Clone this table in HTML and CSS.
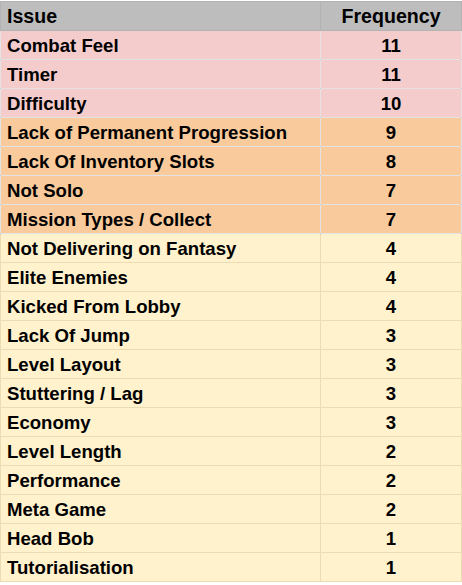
FILE: index.html
```html
<!DOCTYPE html>
<html>
<head>
<meta charset="utf-8">
<link rel="stylesheet" href="styles.css">
</head>
<body>
<table class="sheet">
  <colgroup><col class="c-issue"><col class="c-freq"></colgroup>
  <thead>
    <tr class="head"><th class="issue">Issue</th><th class="freq">Frequency</th></tr>
  </thead>
  <tbody>
    <tr class="red"><td class="issue">Combat Feel</td><td class="freq">11</td></tr>
    <tr class="red"><td class="issue">Timer</td><td class="freq">11</td></tr>
    <tr class="red"><td class="issue">Difficulty</td><td class="freq">10</td></tr>
    <tr class="orange"><td class="issue">Lack of Permanent Progression</td><td class="freq">9</td></tr>
    <tr class="orange"><td class="issue">Lack Of Inventory Slots</td><td class="freq">8</td></tr>
    <tr class="orange"><td class="issue">Not Solo</td><td class="freq">7</td></tr>
    <tr class="orange"><td class="issue">Mission Types / Collect</td><td class="freq">7</td></tr>
    <tr class="yellow"><td class="issue">Not Delivering on Fantasy</td><td class="freq">4</td></tr>
    <tr class="yellow"><td class="issue">Elite Enemies</td><td class="freq">4</td></tr>
    <tr class="yellow"><td class="issue">Kicked From Lobby</td><td class="freq">4</td></tr>
    <tr class="yellow"><td class="issue">Lack Of Jump</td><td class="freq">3</td></tr>
    <tr class="yellow"><td class="issue">Level Layout</td><td class="freq">3</td></tr>
    <tr class="yellow"><td class="issue">Stuttering / Lag</td><td class="freq">3</td></tr>
    <tr class="yellow"><td class="issue">Economy</td><td class="freq">3</td></tr>
    <tr class="yellow"><td class="issue">Level Length</td><td class="freq">2</td></tr>
    <tr class="yellow"><td class="issue">Performance</td><td class="freq">2</td></tr>
    <tr class="yellow"><td class="issue">Meta Game</td><td class="freq">2</td></tr>
    <tr class="yellow"><td class="issue">Head Bob</td><td class="freq">1</td></tr>
    <tr class="yellow"><td class="issue">Tutorialisation</td><td class="freq">1</td></tr>
  </tbody>
</table>
</body>
</html>
```

FILE: styles.css
```css
html, body {
  margin: 0;
  padding: 0;
  background: #ffffff;
}
body {
  padding: 1px 0 0 0;
}
.sheet {
  border-collapse: collapse;
  table-layout: fixed;
  width: 461px;
  font-family: "Liberation Sans", Arial, sans-serif;
  font-weight: bold;
  font-size: 18.6px;
  color: #000;
}
.c-issue { width: 320px; }
.c-freq { width: 141px; }
.sheet th, .sheet td {
  height: 27px;
  padding: 1px 6px 0 6px;
  border: 1px solid rgba(0, 0, 0, 0.11);
  line-height: 27px;
  white-space: nowrap;
  overflow: hidden;
  font-weight: bold;
}
.sheet th {
  font-size: 19.6px;
}
.sheet .issue { text-align: left; }
.sheet .freq { text-align: center; }
.head { background: #bdbdbd; }
.head th { border-color: #b3b3b3; }
.red { background: #f4cccc; }
.orange { background: #f9cb9c; }
.yellow { background: #fff2cc; }
.yellow td { border-color: #ebdcb4; }
```
